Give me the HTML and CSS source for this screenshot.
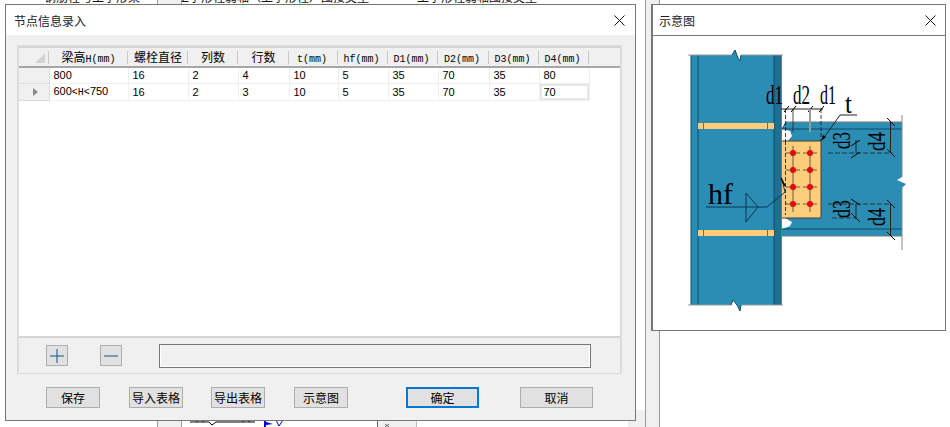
FILE: index.html
```html
<!DOCTYPE html>
<html lang="zh-CN">
<head>
    <meta charset="UTF-8">
    <title>节点信息录入</title>
    <link rel="stylesheet" href="styles.css">
</head>
<body>
    <div class="desktop">
        <!-- window behind the two dialogs -->
        <div class="back-text back-text-a">钢筋柱与工字形梁</div>
        <div class="back-text back-text-b">工字形柱弱轴（上字形柱）围接类型</div>
        <div class="back-text back-text-c">工字形柱弱轴围接类型</div>
        <div class="back-column"></div>
        <div class="back-strip"></div>
        <div class="back-strip back-strip-right"></div>
        <div class="back-side"></div>
        <svg class="back-drawing" viewBox="0 0 950 427" width="950" height="427">
            <path d="M190 422H209L212 425L216 422H255M197 420V422M203 420V422M243 420V422M249 420V422" fill="none" stroke="#000"/>
            <path d="M264 420H266V422L273 424L266 425V427H264Z" fill="#0000e0"/>
            <path d="M276 420L279 426L283 420" fill="none" stroke="#0000e0"/>
            <path d="M385 424L389 427M389 424L385 427" stroke="#666"/>
        </svg>

        <div class="dialog dialog-main">
            <div class="title-bar">
                <span>节点信息录入</span>
                <svg class="close" viewBox="0 0 11 11" width="11" height="11"><path d="M0.5 0.5L10.5 10.5M10.5 0.5L0.5 10.5" stroke="#111" fill="none"/></svg>
            </div>
            <div class="dialog-body">
                <div class="panel">
                    <div class="grid-wrap">
                        <table class="grid">
                            <colgroup>
                                <col class="c-head"><col class="c-h"><col class="c-m"><col class="c-s"><col class="c-w"><col class="c-n"><col class="c-s"><col class="c-s"><col class="c-w"><col class="c-s"><col class="c-s"><col>
                            </colgroup>
                            <thead>
                                <tr>
                                    <th class="corner"><span class="corner-mark"></span></th>
                                    <th>梁高<span class="mono">H(mm)</span></th>
                                    <th>螺栓直径</th>
                                    <th>列数</th>
                                    <th>行数</th>
                                    <th class="unit"><span class="mono">t(mm)</span></th>
                                    <th class="unit"><span class="mono">hf(mm)</span></th>
                                    <th class="unit"><span class="mono">D1(mm)</span></th>
                                    <th class="unit"><span class="mono">D2(mm)</span></th>
                                    <th class="unit"><span class="mono">D3(mm)</span></th>
                                    <th class="unit"><span class="mono">D4(mm)</span></th>
                                    <th class="filler"></th>
                                </tr>
                            </thead>
                            <tbody>
                                <tr>
                                    <td class="row-head"></td>
                                    <td>800</td><td>16</td><td>2</td><td>4</td><td>10</td><td>5</td><td>35</td><td>70</td><td>35</td><td>80</td><td class="filler"></td>
                                </tr>
                                <tr>
                                    <td class="row-head"><span class="row-arrow"></span></td>
                                    <td>600<span class="mono">&lt;H&lt;</span>750</td><td>16</td><td>2</td><td>3</td><td>10</td><td>5</td><td>35</td><td>70</td><td>35</td><td class="selected">70</td><td class="filler"></td>
                                </tr>
                            </tbody>
                        </table>
                    </div>
                    <div class="toolbar">
                        <button class="icon-btn">
                            <svg viewBox="0 0 14 14" width="14" height="14"><path d="M7 0V14M0 7H14" stroke="#0b5583" fill="none"/></svg>
                        </button>
                        <button class="icon-btn icon-btn-minus">
                            <svg viewBox="0 0 14 14" width="14" height="14"><path d="M0 7H14" stroke="#0b5583" fill="none"/></svg>
                        </button>
                        <div class="message"></div>
                    </div>
                </div>
                <div class="actions">
                    <button class="btn">保存</button>
                    <button class="btn btn-import">导入表格</button>
                    <button class="btn btn-export">导出表格</button>
                    <button class="btn btn-sketch">示意图</button>
                    <button class="btn btn-wide btn-ok">确定</button>
                    <button class="btn btn-wide btn-cancel">取消</button>
                </div>
            </div>
        </div>

        <div class="dialog dialog-sketch">
            <div class="title-bar title-bar-line">
                <span>示意图</span>
                <svg class="close" viewBox="0 0 11 11" width="11" height="11"><path d="M0.5 0.5L10.5 10.5M10.5 0.5L0.5 10.5" stroke="#111" fill="none"/></svg>
            </div>
            <svg class="sketch" viewBox="653 36 292 294" width="292" height="294">
                <!-- column -->
                <path d="M691 55H732L735 50L738 58L740 61L741 55H781V305H741L740 311L737 305L733 300L731 305H691Z" fill="#2b8db4"/>
                <path d="M691 55V305M698 55V305" stroke="#0d4a6b" fill="none"/>
                <rect x="774" y="55" width="7" height="250" fill="#1f6f93"/>
                <path d="M774 55V305" stroke="#0d4a6b"/>
                <path d="M781.500 55V305" stroke="#777"/>
                <path d="M688 55H732M741 55H783M688 305H731M741 305H783" stroke="#999"/>
                <path d="M732 55L735 50L738 58L740 61L741 55M731 305L733 300L737 305L740 311L741 305" stroke="#0d4a6b" fill="none"/>
                <!-- stiffeners -->
                <g fill="#fdcd7c">
                    <rect x="698" y="123" width="76" height="6"/>
                    <rect x="698" y="230" width="76" height="6"/>
                </g>
                <path d="M703.500 123V129M767.500 123V129M703.500 230V236M767.500 230V236" stroke="#7a6a3a" fill="none"/>
                <!-- beam -->
                <path d="M786 122H902V177L897 180L906 184L902 188V236H782V229L790 226L792 222L785 218V141H788L792 136L790 131L782 129Z" fill="#2b8db4"/>
                <path d="M782 129H902M782 229H902M786 122L782 129" stroke="#0d4a6b" fill="none"/>
                <path d="M786 122H902M782 236H902" stroke="#777" fill="none"/>
                <path d="M902 115V177M902 188V250" stroke="#888" fill="none"/>
                <!-- plate -->
                <rect x="782" y="141" width="39" height="77" fill="#fdcd7c"/>
                <path d="M782 141H821V218H782" stroke="#4a4030" fill="none"/>
                <g stroke="#6b5a2a" fill="none">
                    <path d="M786 153H800M803 153H817M786 170H800M803 170H817M786 187H800M803 187H817M786 204H800M803 204H817"/>
                    <path d="M793 146V212M810 146V212"/>
                </g>
                <g fill="#e30613">
                    <circle cx="793" cy="153" r="3"/><circle cx="810" cy="153" r="3"/>
                    <circle cx="793" cy="170" r="3"/><circle cx="810" cy="170" r="3"/>
                    <circle cx="793" cy="187" r="3"/><circle cx="810" cy="187" r="3"/>
                    <circle cx="793" cy="204" r="3"/><circle cx="810" cy="204" r="3"/>
                </g>
                <!-- bolt spacing at top -->
                <path d="M781 109H823" stroke="#222" fill="none"/>
                <path d="M784 112L789 106M791 112L796 106M808 112L813 106M819 112L824 106" stroke="#000" fill="none"/>
                <path d="M785.500 109V141M785.500 141V215M821 109V141" stroke="#111" stroke-dasharray="4 2" fill="none" stroke-width="0.8"/>
                <path d="M793 109V132" stroke="#222" stroke-width="0.8" fill="none"/>
                <path d="M810 109V132" stroke="#999" stroke-width="2" fill="none"/>
                <text class="dim" x="766" y="104" textLength="17" lengthAdjust="spacingAndGlyphs">d1</text>
                <text class="dim" x="793" y="104" textLength="17" lengthAdjust="spacingAndGlyphs">d2</text>
                <text class="dim" x="820" y="104" textLength="16" lengthAdjust="spacingAndGlyphs">d1</text>
                <text class="dim" x="845" y="113" textLength="7" lengthAdjust="spacingAndGlyphs">t</text>
                <!-- t leader -->
                <path d="M857 115H840L823 139" stroke="#222" fill="none"/>
                <path d="M821 141L823 135L826 137Z" fill="#000"/>
                <!-- flange and plate dimensions -->
                <path d="M828 153H893M828 204H890M832 218H856" stroke="#222" stroke-dasharray="5 2" fill="none" stroke-width="0.8"/>
                <path d="M856 140V153M856 204V218M890.500 122V153M890.500 204V236" stroke="#222" fill="none"/>
                <path d="M851 146L860 140M851 158L860 152M851 199L860 205M851 213L860 222M887 118L895 126M887 149L895 157M887 200L895 208M887 232L895 240" stroke="#000" fill="none"/>
                <text class="dim dim-side" transform="translate(850 149) rotate(-90)" textLength="17" lengthAdjust="spacingAndGlyphs">d3</text>
                <text class="dim dim-side" transform="translate(885 151) rotate(-90)" textLength="19" lengthAdjust="spacingAndGlyphs">d4</text>
                <text class="dim dim-side" transform="translate(850 218) rotate(-90)" textLength="18" lengthAdjust="spacingAndGlyphs">d3</text>
                <text class="dim dim-side" transform="translate(885 226) rotate(-90)" textLength="18" lengthAdjust="spacingAndGlyphs">d4</text>
                <!-- weld symbol -->
                <text class="dim dim-hf" x="708" y="204" textLength="25" lengthAdjust="spacingAndGlyphs">hf</text>
                <path d="M706 207H758M746 193L758 207L746 222ZM758 207H767L785 192L782 180" stroke="#0d3550" fill="none"/>
                <path d="M781 178L785 186" stroke="#000" stroke-width="1.500" fill="none"/>
            </svg>
        </div>
    </div>
</body>
</html>
```

FILE: styles.css
```css
html, body {
    margin: 0;
    padding: 0;
}
body {
    background: #fff;
    color: #000;
    font-family: "Liberation Sans", "Noto Sans CJK SC", sans-serif;
    font-size: 12px;
    overflow: hidden;
}
.desktop {
    position: relative;
    width: 950px;
    height: 427px;
    overflow: hidden;
}

/* window behind */
.back-text {
    position: absolute;
    top: -10px;
    line-height: 14px;
    white-space: nowrap;
    color: #111;
    font-family: "Noto Sans CJK SC", sans-serif;
}
.back-text-a { left: 44px; }
.back-text-b { left: 177px; }
.back-text-c { left: 417px; }
.back-column {
    position: absolute;
    left: 157px;
    top: 0;
    width: 25px;
    height: 427px;
    box-sizing: border-box;
    background: #f0f0f0;
    border-left: 1px solid #999;
    border-right: 1px solid #999;
}
.back-strip {
    position: absolute;
    left: 377px;
    top: 410px;
    width: 40px;
    height: 17px;
    box-sizing: border-box;
    background: #f0f0f0;
    border-left: 1px solid #666;
    border-right: 1px solid #bbb;
}
.back-strip-right {
    left: 628px;
    width: 18px;
    border-left: none;
    border-right: 1px solid #999;
}
.back-side {
    position: absolute;
    left: 645px;
    top: 0;
    width: 15px;
    height: 427px;
    box-sizing: border-box;
    background: #f0f0f0;
    border-left: 1px solid #999;
    border-right: 1px solid #999;
}
.back-drawing {
    position: absolute;
    left: 0;
    top: 0;
}

/* dialogs */
.dialog {
    position: absolute;
    box-sizing: border-box;
    border: 1px solid #777;
    background: #f0f0f0;
}
.dialog-main {
    left: 5px;
    top: 4px;
    width: 631px;
    height: 417px;
}
.dialog-sketch {
    left: 651px;
    top: 4px;
    width: 295px;
    height: 327px;
    background: #fff;
    border-left-width: 2px;
}
.title-bar {
    display: flex;
    align-items: center;
    justify-content: space-between;
    height: 30px;
    padding: 0 10px 0 8px;
    background: #fff;
    font-family: "Noto Sans CJK SC", sans-serif;
    color: #222;
}
.title-bar-line {
    border-bottom: 1px solid #777;
    padding-left: 6px;
    padding-right: 9px;
}
.close {
    display: block;
}
.dialog-body {
    padding: 10px 13px 0 11px;
}
.sketch {
    display: block;
}

/* table panel */
.panel {
    box-sizing: border-box;
    width: 605px;
    height: 329px;
    border: 2px solid #dcdcdc;
    border-bottom-width: 1px;
}
.grid-wrap {
    height: 291px;
    background: #fff;
    border-bottom: 2px solid #d4d4d4;
    box-sizing: border-box;
}
.grid {
    border-collapse: collapse;
    table-layout: fixed;
    width: 601px;
}
.c-head { width: 30px; }
.c-h { width: 79px; }
.c-m { width: 60px; }
.c-s { width: 50px; }
.c-w { width: 51px; }
.c-n { width: 49px; }
.grid thead tr {
    background: #f0f0f0;
    border-bottom: 2px solid #a6a6a6;
    border-top: 1px solid #d0d0d0;
}
.grid th {
    position: relative;
    height: 18px;
    padding: 0;
    font-family: "Noto Sans CJK SC", sans-serif;
    font-size: 12px;
    font-weight: normal;
    text-align: center;
    line-height: 14px;
}
.grid th.unit {
    padding-right: 3px;
}
.grid th .mono {
    line-height: 10px;
}
.grid th::after {
    content: "";
    position: absolute;
    right: 0;
    top: 3px;
    height: 13px;
    width: 1px;
    background: #c8c8c8;
}
.grid th.filler::after {
    display: none;
}
.grid td {
    height: 15px;
    padding: 0 0 0 4px;
    border: 1px solid #efefef;
    border-left: none;
    font-size: 11px;
    line-height: 15px;
    white-space: nowrap;
}
.mono {
    font-family: "Liberation Mono", monospace;
    font-size: 10px;
}
.grid .row-head {
    padding: 0;
    background: #f0f0f0;
    border: 1px solid #dcdcdc;
    border-left: none;
}
.grid .filler {
    border: none;
}
.grid .selected {
    box-shadow: inset 0 0 0 2px #e4e9ee;
}
.corner-mark {
    position: absolute;
    right: 4px;
    bottom: 3px;
    width: 0;
    height: 0;
    border-left: 10px solid transparent;
    border-bottom: 10px solid #d4d4d4;
}
.row-arrow {
    display: block;
    width: 0;
    height: 0;
    margin-left: 14px;
    border-left: 5px solid #8a8a8a;
    border-top: 4px solid transparent;
    border-bottom: 4px solid transparent;
}

/* tool row under the table */
.toolbar {
    display: flex;
    align-items: flex-start;
    padding: 6px 0 0 27px;
}
.icon-btn {
    display: flex;
    align-items: center;
    justify-content: center;
    box-sizing: border-box;
    width: 22px;
    height: 21px;
    margin-top: 1px;
    padding: 0;
    background: #e1e1e1;
    border: 1px solid #adadad;
}
.icon-btn-minus {
    margin-left: 32px;
}
.message {
    box-sizing: border-box;
    width: 432px;
    height: 24px;
    margin-left: 37px;
    border: 1px solid #777;
    box-shadow: inset 1px -1px 0 #fff, inset -1px 0 0 #fff;
}

/* bottom buttons */
.actions {
    display: flex;
    margin-top: 13px;
    padding-left: 29px;
}
.btn {
    box-sizing: border-box;
    width: 54px;
    height: 21px;
    padding: 0;
    background: #e1e1e1;
    border: 1px solid #adadad;
    color: #000;
    font-family: "Noto Sans CJK SC", sans-serif;
    font-size: 12px;
    line-height: 17px;
    white-space: nowrap;
}
.btn-import { margin-left: 29px; }
.btn-export { margin-left: 28px; }
.btn-sketch { margin-left: 29px; }
.btn-wide { width: 73px; }
.btn-ok {
    margin-left: 58px;
    border: 2px solid #0078d7;
}
.btn-cancel { margin-left: 41px; }

/* sketch labels */
.dim {
    font-family: "Liberation Serif", serif;
    font-size: 28px;
    fill: #000;
}
.dim-side {
    font-size: 25px;
}
.dim-hf {
    font-size: 30px;
}
```
